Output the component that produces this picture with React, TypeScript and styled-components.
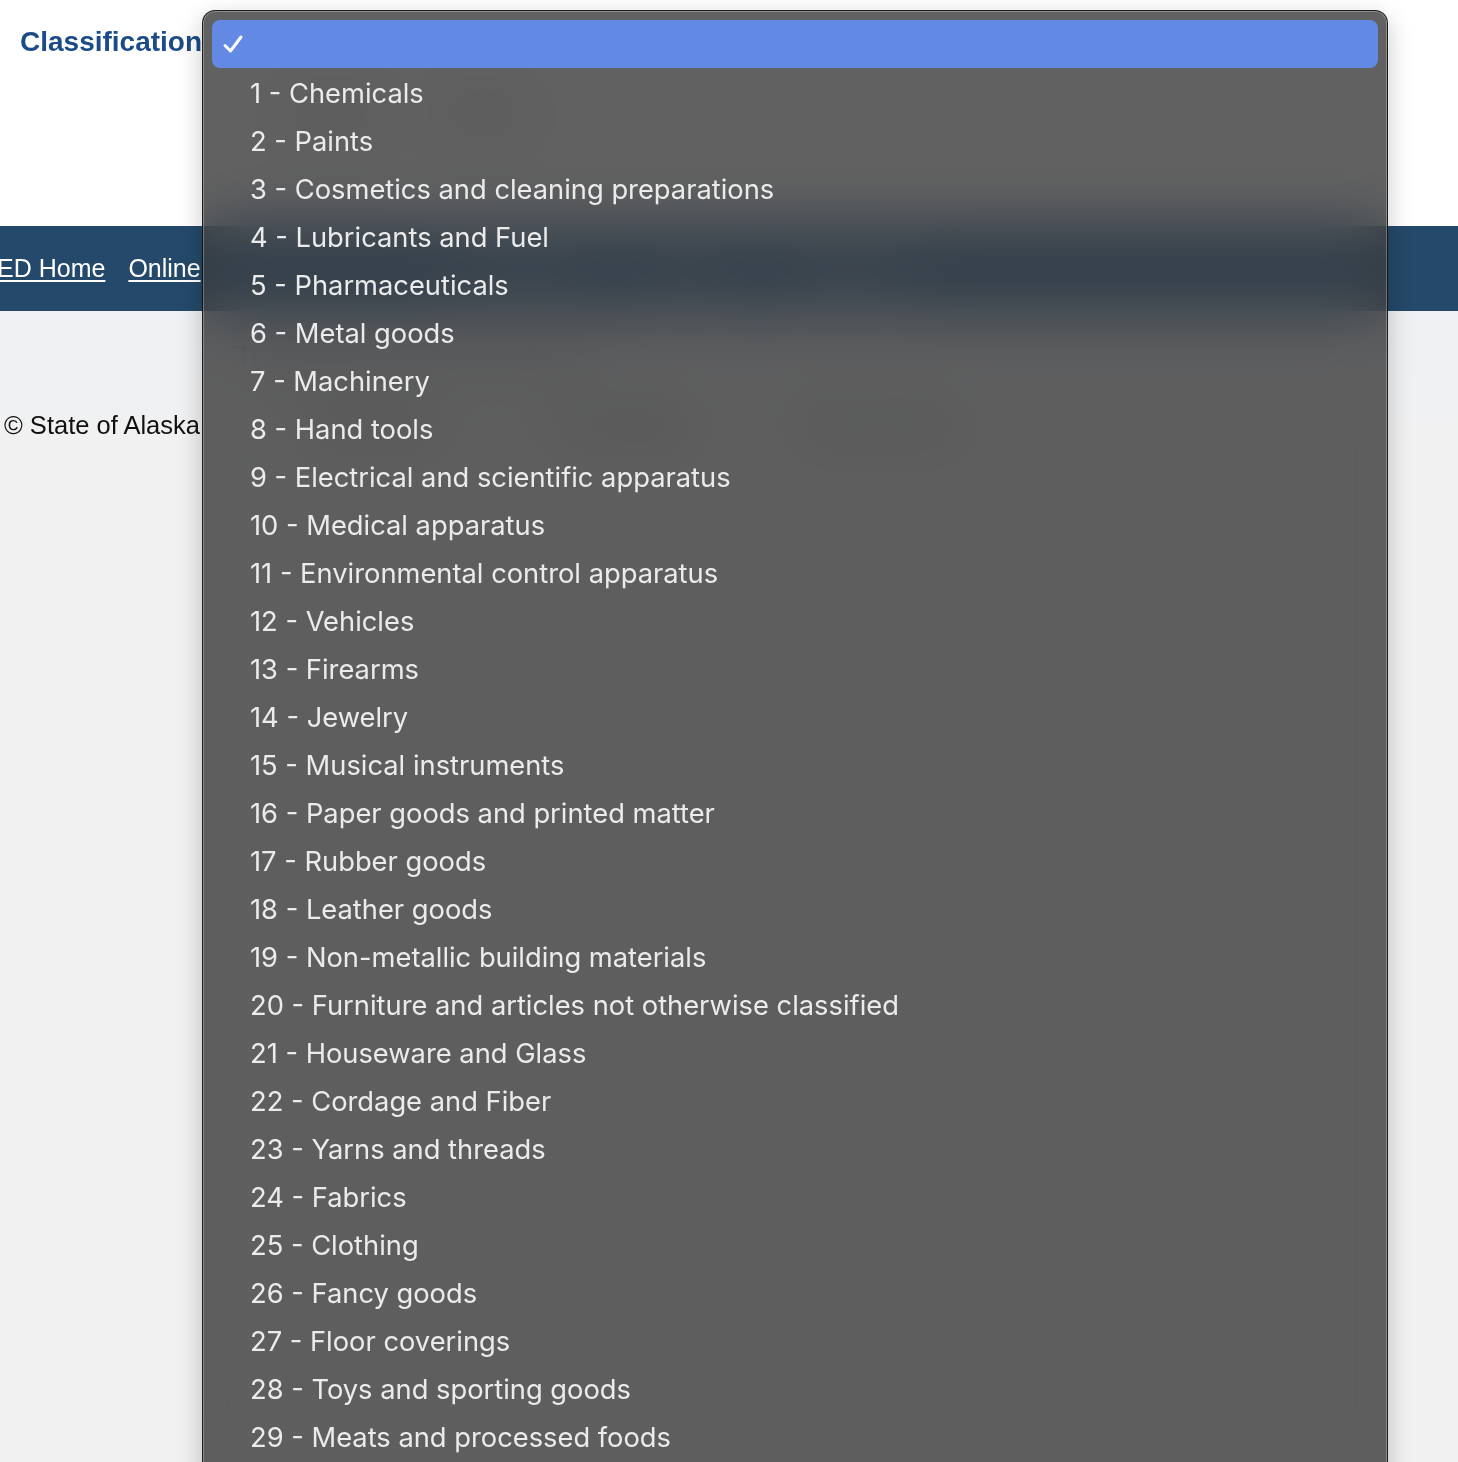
import styled, { createGlobalStyle } from "styled-components";

const GlobalStyle = createGlobalStyle`
    html, body {
        margin: 0;
        padding: 0;
        overflow: hidden;
        background: #f1f1f1;
    }
`

const Page = styled.div`
    position: relative;
    height: 100vh;
    overflow: hidden;
    display: flex;
    flex-direction: column;
    font-family: "Liberation Sans", Arial, sans-serif;
`

const Header = styled.div`
    height: 226px;
    box-sizing: border-box;
    background: #fff;
    padding: 26px 20px 0 20px;
    display: flex;
    flex-direction: column;
    gap: 35px;
`

const Label = styled.a`
    color: #1c4c87;
    font-size: 28px;
    font-weight: 700;
`

const Actions = styled.div`
    display: flex;
    gap: 40px;
    padding-left: 250px;
`

const ActionButton = styled.button`
    font-family: inherit;
    font-size: 22px;
    padding: 6px 24px;
    border: 1px solid #aaa;
    border-radius: 4px;
    background: #ededed;
    color: #555;
`

const NavBar = styled.div`
    height: 85px;
    background: #25496a;
    display: flex;
    align-items: center;
    gap: 23px;
`

const NavGroup = styled.div`
    display: flex;
    gap: 40px;
    padding-left: 230px;
`

const NavLink = styled.a`
    color: #fff;
    font-size: 25px;
    text-decoration: underline;
    text-underline-offset: 3px;
    white-space: nowrap;
    &:first-child {
        margin-left: -3px;
    }
`

const Main = styled.div`
    flex: 1;
    background: linear-gradient(#eef0f3, #f1f1f1 160px);
    padding: 28px 4px 0 4px;
    display: flex;
    flex-direction: column;
    gap: 38px;
`

const Heading = styled.a`
    color: #555;
    font-size: 30px;
    padding-left: 230px;
`

const FooterLine = styled.div`
    color: #111;
    font-size: 25.5px;
    display: flex;
    gap: 110px;
    white-space: nowrap;
`

const Menu = styled.div`
    position: absolute;
    left: 202px;
    top: 10px;
    width: 1186px;
    height: 1600px;
    box-sizing: border-box;
    padding: 9px;
    border-radius: 13px;
    border: 1px solid rgba(0, 0, 0, 0.7);
    background: rgba(58, 58, 58, 0.8);
    backdrop-filter: blur(30px) saturate(1.8);
    box-shadow: inset 0 0 0 1px rgba(255, 255, 255, 0.28), 0 8px 24px rgba(0, 0, 0, 0.22);
    font-family: Inter, "Noto Sans", sans-serif;
`

const Option = styled.div<{ $selected?: boolean }>`
    height: 48px;
    box-sizing: border-box;
    display: flex;
    align-items: center;
    padding-left: ${p => (p.$selected ? "10px" : "38px")};
    padding-top: ${p => (p.$selected ? "0" : "3px")};
    border-radius: 8px;
    background: ${p => (p.$selected ? "#6289e3" : "transparent")};
    color: #ebebeb;
    font-size: 27.3px;
    white-space: nowrap;
`

const Check = () => (
    <svg width="22" height="22" viewBox="0 0 22 22">
        <path d="M3 12.5 L8.5 18 L19 4" fill="none" stroke="#fff" strokeWidth="3" strokeLinecap="round" strokeLinejoin="round" />
    </svg>
)

const classes = [
    "Chemicals",
    "Paints",
    "Cosmetics and cleaning preparations",
    "Lubricants and Fuel",
    "Pharmaceuticals",
    "Metal goods",
    "Machinery",
    "Hand tools",
    "Electrical and scientific apparatus",
    "Medical apparatus",
    "Environmental control apparatus",
    "Vehicles",
    "Firearms",
    "Jewelry",
    "Musical instruments",
    "Paper goods and printed matter",
    "Rubber goods",
    "Leather goods",
    "Non-metallic building materials",
    "Furniture and articles not otherwise classified",
    "Houseware and Glass",
    "Cordage and Fiber",
    "Yarns and threads",
    "Fabrics",
    "Clothing",
    "Fancy goods",
    "Floor coverings",
    "Toys and sporting goods",
    "Meats and processed foods",
    "Staple foods",
    "Natural agricultural products",
]

export default function App() {
    return (
        <>
            <GlobalStyle />
            <Page>
                <Header>
                    <Label>Classification</Label>
                    <Actions>
                        <ActionButton>Search</ActionButton>
                        <ActionButton>Reset</ActionButton>
                    </Actions>
                </Header>
                <NavBar>
                    <NavLink>ED Home</NavLink>
                    <NavLink>Online</NavLink>
                    <NavGroup>
                        <NavLink>Corporations</NavLink>
                        <NavLink>Licensing</NavLink>
                        <NavLink>Trademarks</NavLink>
                    </NavGroup>
                </NavBar>
                <Main>
                    <Heading>Trademark Search Results</Heading>
                    <FooterLine>
                        <span>© State of Alaska</span>
                        <span>Webmaster</span>
                        <span>Accessibility</span>
                        <span>Privacy Policy</span>
                    </FooterLine>
                </Main>
                <Menu>
                    <Option $selected>
                        <Check />
                    </Option>
                    {classes.map((name, i) => (
                        <Option key={name}>{`${i + 1} - ${name}`}</Option>
                    ))}
                </Menu>
            </Page>
        </>
    )
}
